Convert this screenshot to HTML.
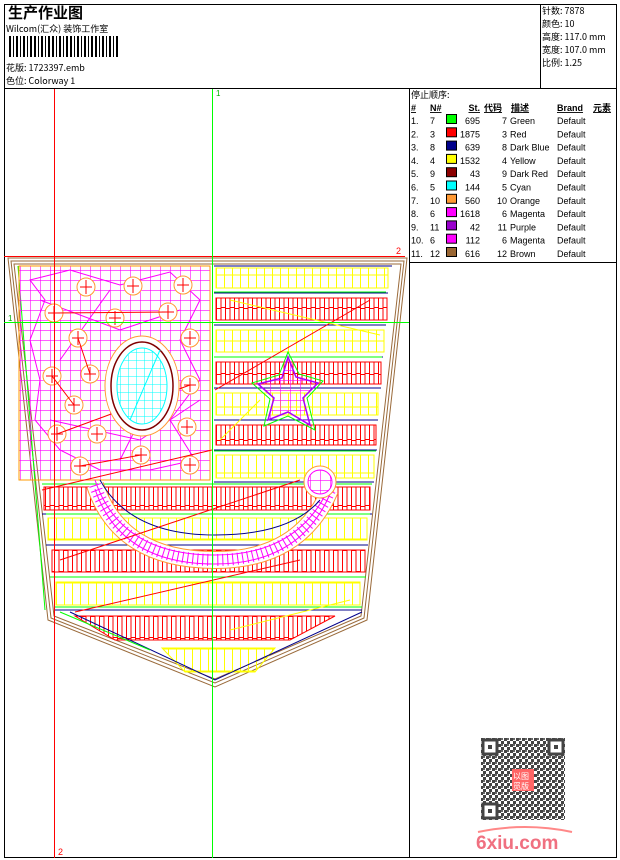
<!DOCTYPE html>
<html><head><meta charset="utf-8"><style>
html,body{margin:0;padding:0;background:#fff}
svg{display:block}
text{font-family:"Liberation Sans","WenQuanYi Zen Hei",sans-serif;font-size:9px;fill:#000}
.c{font-family:"WenQuanYi Zen Hei","Noto Sans CJK SC",sans-serif}
</style></head><body>
<svg width="620" height="860" viewBox="0 0 620 860" xmlns="http://www.w3.org/2000/svg">
<defs>
<pattern id="mg" width="10" height="10" patternUnits="userSpaceOnUse"><path d="M0 0V10M0 0H10" stroke="#f0f" stroke-width="1.2" fill="none"/></pattern>
<pattern id="cg" width="8" height="8" patternUnits="userSpaceOnUse"><path d="M0 0V8M0 0H8" stroke="#0ff" stroke-width="1" fill="none"/></pattern>
<pattern id="yg" width="8" height="22" patternUnits="userSpaceOnUse"><path d="M0.5 0V22M0 11H8" stroke="#ff0" stroke-width="1" fill="none"/></pattern>
<pattern id="rg" width="9" height="22" patternUnits="userSpaceOnUse"><path d="M0.5 0V22M5 0V22M0 0.5H5M5 21.5H9" stroke="#f00" stroke-width="1" fill="none"/></pattern>
<pattern id="qr" width="6" height="6" patternUnits="userSpaceOnUse"><rect width="3" height="3" fill="#444"/><rect x="3" y="3" width="3" height="3" fill="#444"/><rect x="3" y="0" width="2" height="2" fill="#666"/></pattern>
</defs>
<rect width="620" height="860" fill="#fff"/>
<g stroke="#000" stroke-width="1" fill="none">
<rect x="4.5" y="4.5" width="612" height="853"/>
<line x1="4" y1="88.5" x2="617" y2="88.5"/>
<line x1="540.5" y1="4" x2="540.5" y2="88"/>
<line x1="409.5" y1="88" x2="409.5" y2="858"/>
<line x1="409" y1="262.5" x2="617" y2="262.5"/>
</g>
<text x="8" y="18" class="c" style="font-size:15px;font-weight:bold">生产作业图</text>
<text x="6" y="32" class="c">Wilcom(汇众) 装饰工作室</text>
<g fill="#000">
<rect x="9" y="36" width="2" height="21"/><rect x="13" y="36" width="1" height="21"/><rect x="16" y="36" width="2" height="21"/><rect x="20" y="36" width="1" height="21"/><rect x="23" y="36" width="2" height="21"/><rect x="27" y="36" width="1" height="21"/><rect x="30" y="36" width="2" height="21"/><rect x="34" y="36" width="2" height="21"/><rect x="38" y="36" width="1" height="21"/><rect x="41" y="36" width="2" height="21"/><rect x="45" y="36" width="1" height="21"/><rect x="48" y="36" width="2" height="21"/><rect x="52" y="36" width="2" height="21"/><rect x="56" y="36" width="1" height="21"/><rect x="59" y="36" width="2" height="21"/><rect x="63" y="36" width="1" height="21"/><rect x="66" y="36" width="2" height="21"/><rect x="70" y="36" width="2" height="21"/><rect x="74" y="36" width="1" height="21"/><rect x="77" y="36" width="2" height="21"/><rect x="81" y="36" width="1" height="21"/><rect x="84" y="36" width="2" height="21"/><rect x="88" y="36" width="1" height="21"/><rect x="91" y="36" width="2" height="21"/><rect x="95" y="36" width="2" height="21"/><rect x="99" y="36" width="1" height="21"/><rect x="102" y="36" width="2" height="21"/><rect x="106" y="36" width="1" height="21"/><rect x="109" y="36" width="2" height="21"/><rect x="113" y="36" width="1" height="21"/><rect x="116" y="36" width="2" height="21"/>
</g>
<text x="6" y="71" class="c">花版:  1723397.emb</text>
<text x="6" y="84" class="c">色位:  Colorway 1</text>
<text x="542" y="14" class="c">针数: 7878</text>
<text x="542" y="27" class="c">颜色: 10</text>
<text x="542" y="40" class="c">高度: 117.0 mm</text>
<text x="542" y="53" class="c">宽度: 107.0 mm</text>
<text x="542" y="66" class="c">比例: 1.25</text>
<text x="411" y="98" class="c">停止顺序:</text>
<g style="font-weight:bold;text-decoration:underline">
<text x="411" y="111">#</text><text x="430" y="111">N#</text><text x="480" y="111" text-anchor="end">St.</text>
<text x="484" y="111" class="c">代码</text><text x="511" y="111" class="c">描述</text><text x="557" y="111">Brand</text><text x="593" y="111" class="c">元素</text>
</g>
<g id="rows"></g>
<g fill="none">
<polygon points="8,258 407,258 367,620 215,687 48,620" stroke="#9a6a3a"/>
<polygon points="11,261 404,261 364,618 215,683 51,618" stroke="#9a6a3a"/>
<polygon points="14,264 401,264 361,616 215,679 54,616" stroke="#9a6a3a"/>
<polyline points="18,266 45,610" stroke="#0f0"/>
</g>
<rect x="19" y="266" width="191" height="214" fill="url(#mg)" stroke="#f90"/>
<g stroke="#f0f" fill="none">
<path d="M30 280 L70 270 120 285 170 272 200 300 180 340 200 380 170 420 195 460 150 470 100 470 60 450 35 420 40 380 30 340 45 300Z"/>
<path d="M40 300 L120 330 180 310 M50 420 L140 440 200 400 M60 360 L110 290 M170 360 L120 460"/>
</g>
<g stroke="#f93" fill="#fff" stroke-width="1">
<circle cx="86" cy="287" r="9"/><circle cx="133" cy="286" r="9"/><circle cx="183" cy="285" r="9"/>
<circle cx="54" cy="313" r="9"/><circle cx="115" cy="318" r="9"/><circle cx="168" cy="312" r="9"/>
<circle cx="78" cy="338" r="9"/><circle cx="190" cy="338" r="9"/><circle cx="90" cy="374" r="9"/>
<circle cx="52" cy="376" r="9"/><circle cx="74" cy="405" r="9"/><circle cx="190" cy="385" r="9"/>
<circle cx="57" cy="434" r="9"/><circle cx="97" cy="434" r="9"/><circle cx="187" cy="427" r="9"/>
<circle cx="80" cy="466" r="9"/><circle cx="141" cy="455" r="9"/><circle cx="190" cy="465" r="9"/>
</g>
<g stroke="#f00" fill="none">
<path d="M86 280v14M80 287h12M133 279v14M127 286h12M183 278v14M177 285h12M54 306v14M48 313h12M115 311v14M109 318h12M168 305v14M162 312h12M78 331v14M72 338h12M190 331v14M184 338h12M90 367v14M84 374h12M52 369v14M46 376h12M74 398v14M68 405h12M190 378v14M184 385h12M57 427v14M51 434h12M97 427v14M91 434h12M187 420v14M181 427h12M80 459v14M74 466h12M141 448v14M135 455h12M190 458v14M184 465h12"/>
<path d="M54 313 L168 312 M78 338 L90 374 M52 376 L74 405 M57 434 L190 385 M80 466 L141 455"/>
</g>
<ellipse cx="142" cy="386" rx="37" ry="50" fill="#fff" stroke="#f93"/>
<ellipse cx="142" cy="386" rx="31" ry="44" fill="#fff" stroke="#800000" stroke-width="1.5"/>
<ellipse cx="142" cy="386" rx="25" ry="38" fill="url(#cg)" stroke="#0ff"/>
<line x1="130" y1="420" x2="160" y2="350" stroke="#0ff"/>
<g stroke-width="1">
<rect x="216" y="268" width="172" height="20" fill="url(#yg)" stroke="#ff0"/>
<rect x="216" y="298" width="171" height="22" fill="url(#rg)" stroke="#f00"/>
<rect x="216" y="330" width="168" height="22" fill="url(#yg)" stroke="#ff0"/>
<rect x="216" y="362" width="165" height="22" fill="url(#rg)" stroke="#f00"/>
<rect x="216" y="393" width="162" height="22" fill="url(#yg)" stroke="#ff0"/>
<rect x="216" y="425" width="160" height="20" fill="url(#rg)" stroke="#f00"/>
<rect x="216" y="455" width="158" height="23" fill="url(#yg)" stroke="#ff0"/>
<rect x="44" y="487" width="326" height="23" fill="url(#rg)" stroke="#f00"/>
<rect x="48" y="518" width="319" height="22" fill="url(#yg)" stroke="#ff0"/>
<rect x="52" y="550" width="313" height="22" fill="url(#rg)" stroke="#f00"/>
<rect x="56" y="582" width="304" height="23" fill="url(#yg)" stroke="#ff0"/>
<polygon points="75,616 335,616 290,640 115,640" fill="url(#rg)" stroke="#f00"/>
<polygon points="162,648 275,648 255,672 185,672" fill="url(#yg)" stroke="#ff0"/>
</g>
<g stroke="#00008b" fill="none">
<path d="M214 266H392M214 293H388M214 325H386M214 357H383M214 388H381M214 420H378M214 450H377M214 482H374M42 514H372M46 545H368M50 577H365M55 610H362M70 612 215 680 362 612"/>
</g>
<g stroke="#0f0" fill="none">
<path d="M214 292H386M214 357H382M214 451H376M42 484H372M46 514H370M50 577H366M55 607H362M60 612 150 650"/>
</g>
<path d="M95 485 Q120 560 215 560 Q300 560 330 490" stroke="#f93" stroke-width="18" fill="none"/>
<path d="M95 485 Q120 560 215 560 Q300 560 330 490" stroke="#fff" stroke-width="16" fill="none"/>
<path d="M95 485 Q120 560 215 560 Q300 560 330 490" stroke="#f0f" stroke-width="12" fill="none" stroke-dasharray="1 4"/>
<path d="M95 485 Q120 560 215 560 Q300 560 330 490" stroke="#f0f" stroke-width="1" fill="none" transform="translate(0,-5)"/>
<path d="M95 485 Q120 560 215 560 Q300 560 330 490" stroke="#f0f" stroke-width="1" fill="none" transform="translate(0,4)"/>
<path d="M100 480 Q130 535 215 535 Q290 535 320 500" stroke="#00008b" stroke-width="1" fill="none"/>
<circle cx="320" cy="482" r="16" fill="#fff" stroke="#f93"/><circle cx="320" cy="482" r="12" fill="url(#mg)" stroke="#f0f"/>
<path d="M288 357 L296 377 318 383 303 398 310 425 288 412 268 420 274 398 258 384 282 378Z" fill="url(#mg)" stroke="#a0f" stroke-width="1.5"/>
<path d="M288 352 L299 374 323 381 307 398 315 430 288 416 264 426 270 399 252 383 279 375Z" fill="none" stroke="#0f0"/>
<g stroke="#f00" fill="none"><path d="M60 560 L300 480 M75 612 L300 560 M215 390 L370 300 M42 490 L212 450"/></g>
<g stroke="#ff0" fill="none"><path d="M230 300 L380 335 M220 440 L260 400 M230 630 L350 600"/></g>
<line x1="54.5" y1="89" x2="54.5" y2="858" stroke="#f00"/>
<line x1="4" y1="256.5" x2="405" y2="256.5" stroke="#f00"/>
<line x1="212.5" y1="89" x2="212.5" y2="858" stroke="#0f0"/>
<line x1="4" y1="322.5" x2="409" y2="322.5" stroke="#0f0"/>
<text x="216" y="96" style="fill:#0a0;font-size:8px">1</text>
<text x="396" y="254" style="fill:#f00;font-size:9px">2</text>
<text x="8" y="321" style="fill:#0a0;font-size:8px">1</text>
<text x="58" y="855" style="fill:#f00;font-size:9px">2</text>
<rect x="481" y="738" width="84" height="82" fill="url(#qr)"/>
<g fill="#fff" stroke="#444" stroke-width="3">
<rect x="483" y="740" width="14" height="14"/><rect x="549" y="740" width="14" height="14"/><rect x="483" y="804" width="14" height="14"/>
</g>
<g fill="#444"><rect x="488" y="745" width="4" height="4"/><rect x="554" y="745" width="4" height="4"/><rect x="488" y="809" width="4" height="4"/></g>
<rect x="512" y="769" width="22" height="22" fill="#f66"/>
<text x="513" y="779" class="c" style="fill:#fff;font-size:8px">以图</text><text x="513" y="789" class="c" style="fill:#fff;font-size:8px">觅版</text>
<path d="M478 832 Q525 822 572 832" stroke="#f88" stroke-width="2" fill="none"/>
<text x="476" y="849" style="fill:#f07080;font-size:19px;font-weight:bold">6xiu.com</text>
</svg>
<script>
var d=[["1.","7","#0f0","695","7","Green"],["2.","3","#f00","1875","3","Red"],["3.","8","#00008b","639","8","Dark Blue"],["4.","4","#ff0","1532","4","Yellow"],["5.","9","#8b0000","43","9","Dark Red"],["6.","5","#0ff","144","5","Cyan"],["7.","10","#f93","560","10","Orange"],["8.","6","#f0f","1618","6","Magenta"],["9.","11","#90c","42","11","Purple"],["10.","6","#f0f","112","6","Magenta"],["11.","12","#963","616","12","Brown"]];
var g=document.getElementById('rows'),h="";
d.forEach(function(r,i){var y=124+i*13.3;
h+='<text x="411" y="'+y+'">'+r[0]+'</text><text x="430" y="'+y+'">'+r[1]+'</text>';
h+='<rect x="446.5" y="'+(y-9.5)+'" width="10" height="9" fill="'+r[2]+'" stroke="#000"/>';
h+='<text x="480" y="'+y+'" text-anchor="end">'+r[3]+'</text><text x="507" y="'+y+'" text-anchor="end">'+r[4]+'</text>';
h+='<text x="510" y="'+y+'">'+r[5]+'</text><text x="557" y="'+y+'">Default</text>';});
g.innerHTML=h;
</script>
</body></html>
